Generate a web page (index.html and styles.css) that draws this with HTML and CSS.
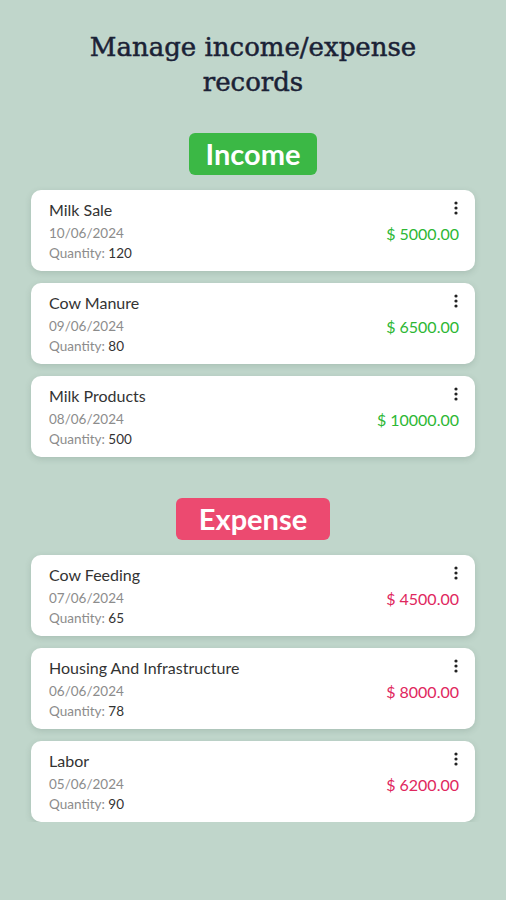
FILE: index.html
```html
<!DOCTYPE html>
<html lang="en">
<head>
    <meta charset="UTF-8">
    <meta name="viewport" content="width=device-width, initial-scale=1.0">
    <title>Income / Expense Records</title>
    <link rel="stylesheet" href="styles.css">
</head>
<body>

<header>
    <h1>Manage income/expense<br>records</h1>
</header>

<main>
    <section class="group">
        <div class="badge income">Income</div>

        <div class="record">
            <div class="info">
                <p class="name">Milk Sale</p>
                <p class="date">10/06/2024</p>
                <p class="qty">Quantity: <span>120</span></p>
            </div>
            <div class="side">
                <svg class="more" width="4" height="14" viewBox="0 0 4 14"><circle cx="2" cy="2" r="1.6"/><circle cx="2" cy="7" r="1.6"/><circle cx="2" cy="12" r="1.6"/></svg>
                <p class="amount in">$ 5000.00</p>
            </div>
        </div>

        <div class="record">
            <div class="info">
                <p class="name">Cow Manure</p>
                <p class="date">09/06/2024</p>
                <p class="qty">Quantity: <span>80</span></p>
            </div>
            <div class="side">
                <svg class="more" width="4" height="14" viewBox="0 0 4 14"><circle cx="2" cy="2" r="1.6"/><circle cx="2" cy="7" r="1.6"/><circle cx="2" cy="12" r="1.6"/></svg>
                <p class="amount in">$ 6500.00</p>
            </div>
        </div>

        <div class="record">
            <div class="info">
                <p class="name">Milk Products</p>
                <p class="date">08/06/2024</p>
                <p class="qty">Quantity: <span>500</span></p>
            </div>
            <div class="side">
                <svg class="more" width="4" height="14" viewBox="0 0 4 14"><circle cx="2" cy="2" r="1.6"/><circle cx="2" cy="7" r="1.6"/><circle cx="2" cy="12" r="1.6"/></svg>
                <p class="amount in">$ 10000.00</p>
            </div>
        </div>
    </section>

    <section class="group">
        <div class="badge expense">Expense</div>

        <div class="record">
            <div class="info">
                <p class="name">Cow Feeding</p>
                <p class="date">07/06/2024</p>
                <p class="qty">Quantity: <span>65</span></p>
            </div>
            <div class="side">
                <svg class="more" width="4" height="14" viewBox="0 0 4 14"><circle cx="2" cy="2" r="1.6"/><circle cx="2" cy="7" r="1.6"/><circle cx="2" cy="12" r="1.6"/></svg>
                <p class="amount out">$ 4500.00</p>
            </div>
        </div>

        <div class="record">
            <div class="info">
                <p class="name">Housing And Infrastructure</p>
                <p class="date">06/06/2024</p>
                <p class="qty">Quantity: <span>78</span></p>
            </div>
            <div class="side">
                <svg class="more" width="4" height="14" viewBox="0 0 4 14"><circle cx="2" cy="2" r="1.6"/><circle cx="2" cy="7" r="1.6"/><circle cx="2" cy="12" r="1.6"/></svg>
                <p class="amount out">$ 8000.00</p>
            </div>
        </div>

        <div class="record">
            <div class="info">
                <p class="name">Labor</p>
                <p class="date">05/06/2024</p>
                <p class="qty">Quantity: <span>90</span></p>
            </div>
            <div class="side">
                <svg class="more" width="4" height="14" viewBox="0 0 4 14"><circle cx="2" cy="2" r="1.6"/><circle cx="2" cy="7" r="1.6"/><circle cx="2" cy="12" r="1.6"/></svg>
                <p class="amount out">$ 6200.00</p>
            </div>
        </div>
    </section>
</main>

</body>
</html>
```

FILE: styles.css
```css
body {
    font-family: Lato, "Open Sans", sans-serif;
    margin: 0;
    padding: 0;
    background-color: #c0d6cb;
    color: #2a2a2a;
}
header {
    padding: 30px 0 0;
    text-align: center;
}
header h1 {
    margin: 0;
    font-family: "DejaVu Serif", "Liberation Serif", serif;
    font-weight: normal;
    font-size: 26px;
    line-height: 35px;
    color: #1b2236;
    -webkit-text-stroke: 0.5px #1b2236;
}
main {
    padding: 0 31px;
}
.group {
    display: flex;
    flex-direction: column;
    gap: 12px;
    margin-top: 33px;
}
.group + .group {
    margin-top: 41px;
}
.badge {
    align-self: center;
    margin-bottom: 3px;
    padding: 0 17px;
    height: 42px;
    line-height: 41px;
    border-radius: 6px;
    color: #fff;
    font-weight: bold;
    font-size: 29px;
}
.badge.income {
    background: #3bb845;
}
.badge.expense {
    padding: 0 23px;
    background: #ec4a70;
}
.record {
    display: flex;
    justify-content: space-between;
    height: 81px;
    box-sizing: border-box;
    padding: 10px 16px 0 18px;
    background: #fff;
    border-radius: 10px;
    box-shadow: 0 2px 6px rgba(60, 90, 75, 0.18);
}
.record p {
    margin: 0;
}
.name {
    font-size: 16px;
    line-height: 20px;
    color: #333;
}
.date,
.qty {
    font-size: 13.5px;
    line-height: 20px;
    color: #8c8c8c;
}
.date {
    margin-top: 3px !important;
}
.qty span {
    color: #333;
}
.side {
    display: flex;
    flex-direction: column;
    align-items: flex-end;
}
.more {
    fill: #222;
    margin-top: 1px;
    margin-right: 1px;
}
.amount {
    margin-top: 9px !important;
    font-size: 16px;
    line-height: 20px;
}
.amount.in {
    color: #2db734;
}
.amount.out {
    color: #e0275e;
}
```
